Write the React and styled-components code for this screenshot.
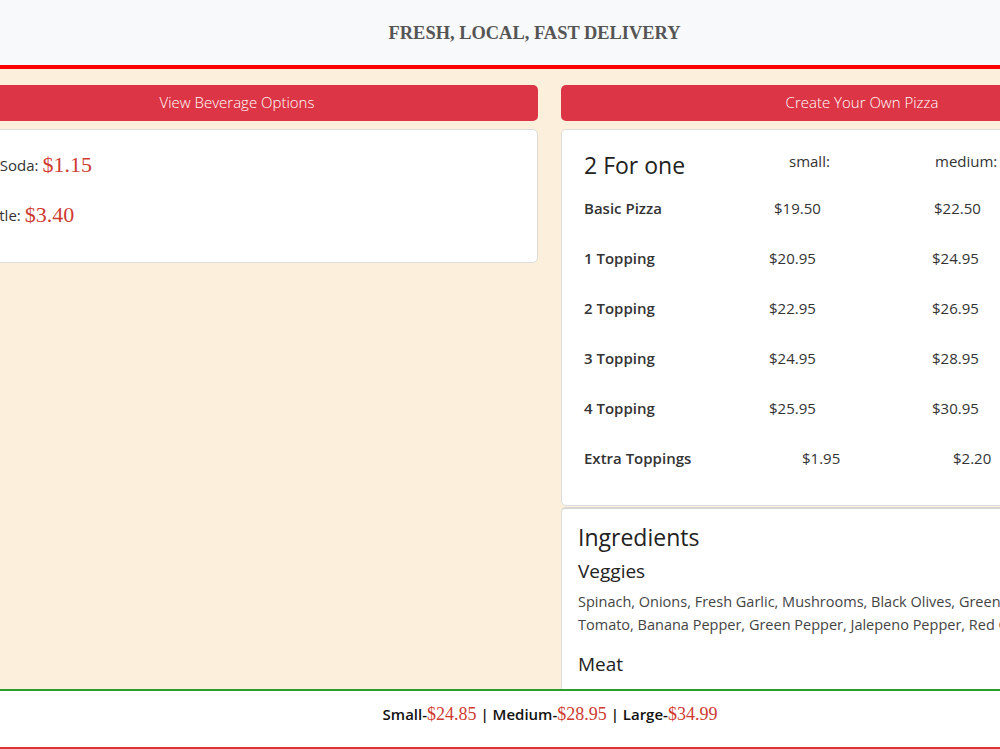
import React from "react";
import styled, { createGlobalStyle } from "styled-components";

const GlobalStyle = createGlobalStyle`
  html, body {
    margin: 0;
    padding: 0;
    overflow: hidden;
    background: #fcf0dd;
    font-family: "Open Sans", "Noto Sans", sans-serif;
    color: #333;
  }
`;

const Page = styled.div`
  height: 749px;
  overflow: hidden;
  background: #fcf0dd;
`;

const Header = styled.header`
  height: 65px;
  background: #f8f9fa;
  border-bottom: 4px solid #ff0000;
  display: flex;
  align-items: center;
  justify-content: center;
  padding-left: 70px;
`;

const Tagline = styled.h1`
  margin: 0;
  font-family: "Liberation Serif", "DejaVu Serif", serif;
  font-weight: bold;
  font-size: 19px;
  color: #555;
  transform: scaleX(0.97);
`;

const Row = styled.div`
  width: 1227px;
  margin-left: -64px;
  padding-top: 16px;
  display: grid;
  grid-template-columns: 602px 602px;
  column-gap: 23px;
  align-items: start;
`;

const Column = styled.div`
  display: flex;
  flex-direction: column;
`;

const RedButton = styled.button`
  height: 36px;
  border: none;
  border-radius: 5px;
  background: #dc3545;
  color: #fff;
  font-family: "Open Sans", "Noto Sans", sans-serif;
  font-size: 15px;
  font-weight: 300;
  margin-bottom: 8px;
  padding-bottom: 3px;
  cursor: pointer;
`;

const Card = styled.div`
  background: #fff;
  border: 1px solid #dcdcdc;
  border-radius: 5px;
  padding: ${(p) => p.pad || "16px 20px"};
  & + & {
    margin-top: 1px;
    border-top: 2px solid #d6d6d6;
  }
`;

const Drink = styled.p`
  margin: 0;
  height: 50px;
  display: flex;
  align-items: center;
  font-size: 15px;
  gap: 4px;
  color: #333;
`;

const Price = styled.span`
  font-family: "Liberation Serif", "DejaVu Serif", serif;
  font-size: ${(p) => p.size || "22px"};
  font-weight: normal;
  color: #cf3b31;
`;

const MenuGrid = styled.div`
  display: grid;
  grid-template-columns: 185px 162px 200px;
  grid-template-rows: 41px;
  grid-auto-rows: 50px;
  padding-left: 2px;
`;

const Cell = styled.div`
  display: flex;
  align-items: ${(p) => (p.top ? "flex-start" : "center")};
  padding-left: ${(p) => p.indent || 0}px;
  padding-top: ${(p) => p.top || 0}px;
  font-size: ${(p) => (p.heading ? "23px" : "15px")};
  font-weight: ${(p) => (p.bold ? 600 : 400)};
  color: ${(p) => (p.heading ? "#222" : "#333")};
  white-space: nowrap;
`;

const IngTitle = styled.h2`
  margin: 0 0 5px;
  font-weight: 400;
  font-size: 23px;
  color: #222;
`;

const IngHeading = styled.h3`
  margin: 0 0 6px;
  font-weight: 400;
  font-size: 19px;
  color: #222;
`;

const IngText = styled.p`
  margin: 0 0 15px;
  font-size: 14.5px;
  line-height: 23px;
  color: #444;
`;

const Footer = styled.footer`
  position: fixed;
  left: 0;
  right: 0;
  bottom: 0;
  box-sizing: border-box;
  height: 60px;
  background: #fff;
  border-top: 2px solid #2a9d2a;
  border-bottom: 2px solid #e0303a;
  display: flex;
  align-items: center;
  justify-content: center;
  padding-left: 100px;
  padding-bottom: 10px;
  font-size: 15px;
  font-weight: 600;
  color: #111;
`;

const rows = [
  ["Basic Pizza", "$19.50", 5, "$22.50", 3],
  ["1 Topping", "$20.95", 0, "$24.95", 1],
  ["2 Topping", "$22.95", 0, "$26.95", 1],
  ["3 Topping", "$24.95", 0, "$28.95", 1],
  ["4 Topping", "$25.95", 0, "$30.95", 1],
  ["Extra Toppings", "$1.95", 33, "$2.20", 22],
];

export default function App() {
  return (
    <Page>
      <GlobalStyle />
      <Header>
        <Tagline>FRESH, LOCAL, FAST DELIVERY</Tagline>
      </Header>
      <Row>
        <Column>
          <RedButton>View Beverage Options</RedButton>
          <Card pad="10px 14px 22px">
            <Drink>
              Can of Soda: <Price>$1.15</Price>
            </Drink>
            <Drink>
              2 L Bottle: <Price>$3.40</Price>
            </Drink>
          </Card>
        </Column>
        <Column>
          <RedButton>Create Your Own Pizza</RedButton>
          <Card pad="12px 20px 22px">
            <MenuGrid>
              <Cell heading top={7}>2 For one</Cell>
              <Cell indent={20} top={9}>small:</Cell>
              <Cell indent={4} top={9}>medium:</Cell>
              {rows.map(([name, s, si, m, mi]) => (
                <React.Fragment key={name}>
                  <Cell bold>{name}</Cell>
                  <Cell indent={si}>{s}</Cell>
                  <Cell indent={mi}>{m}</Cell>
                </React.Fragment>
              ))}
            </MenuGrid>
          </Card>
          <Card pad="12px 16px">
            <IngTitle>Ingredients</IngTitle>
            <IngHeading>Veggies</IngHeading>
            <IngText>
              Spinach, Onions, Fresh Garlic, Mushrooms, Black Olives, Green
              Olives, Pineapple,
              <br />
              Tomato, Banana Pepper, Green Pepper, Jalepeno Pepper, Red Onion
            </IngText>
            <IngHeading>Meat</IngHeading>
            <IngText>
              Pepperoni, Ham, Bacon, Italian Sausage, Ground Beef, Chicken,
              Meatballs
            </IngText>
          </Card>
        </Column>
      </Row>
      <Footer>
        Small-<Price size="18px">$24.85</Price>&nbsp;|&nbsp;Medium-
        <Price size="18px">$28.95</Price>&nbsp;|&nbsp;Large-
        <Price size="18px">$34.99</Price>
      </Footer>
    </Page>
  );
}
